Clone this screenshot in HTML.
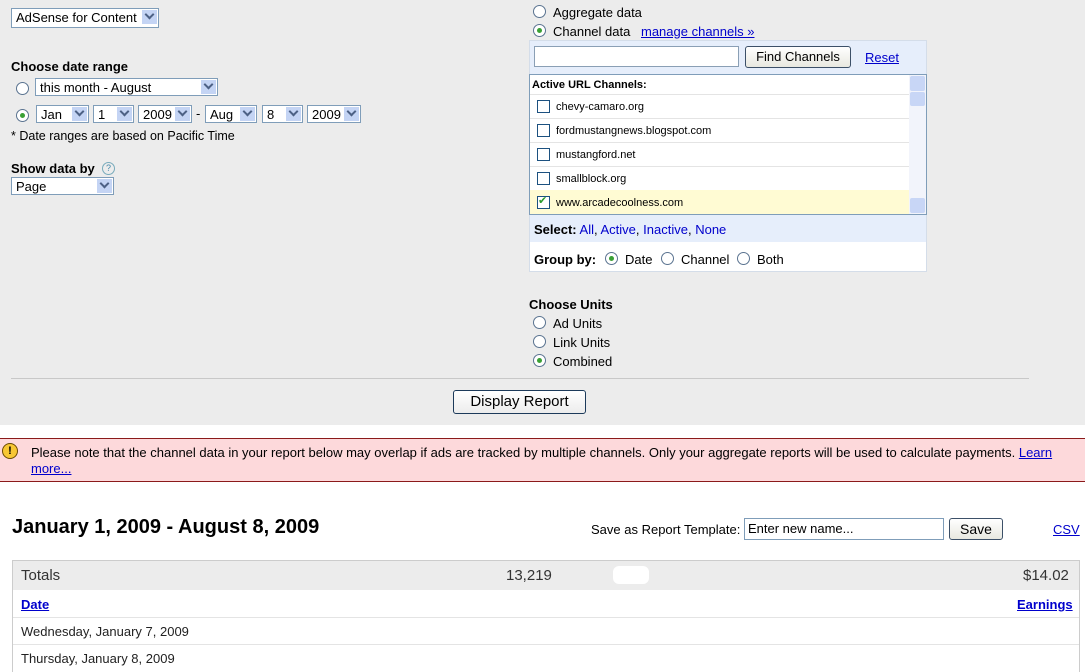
<!DOCTYPE html>
<html><head><style>
body{margin:0;width:1085px;height:672px;overflow:hidden;font-family:"Liberation Sans",Arial,sans-serif;font-size:13px;color:#000;background:#fff;position:relative}
.a{position:absolute;white-space:nowrap}
.sel{position:absolute;height:18px;border:1px solid #7f9db9;background:#fff;font-size:13px;line-height:18px;padding-left:4px;box-sizing:border-box}
.sel:after{content:"";position:absolute;right:1px;top:1px;width:15px;height:14px;background:#c4d4f4;border:0 solid #aac}
.sel i{position:absolute;right:5px;top:4px;width:5px;height:5px;border-right:2px solid #4d6185;border-bottom:2px solid #4d6185;transform:rotate(45deg);z-index:2;top:2px}
.r{position:absolute;width:11px;height:11px;border:1px solid #5a7390;border-radius:50%;background:#fff}
.r.on:after{content:"";position:absolute;left:3px;top:3px;width:5px;height:5px;border-radius:50%;background:#3aa035}
.cb{position:absolute;left:8px;width:11px;height:11px;border:1px solid #1c5180;background:#fff}
a{color:#0000cc}
.b{font-weight:bold}
</style></head><body>
<div class="a" style="left:0;top:0;width:1085px;height:425px;background:#ececec"></div>

<div class="sel" style="left:11px;top:8px;width:148px;height:20px">AdSense for Content<i></i></div>
<div class="a b" style="left:11px;top:59px;font-size:13px">Choose date range</div>
<div class="r" style="left:16px;top:82px"></div>
<div class="sel" style="left:35px;top:78px;width:183px">this month - August<i></i></div>
<div class="r on" style="left:16px;top:109px"></div>
<div class="sel" style="left:36px;top:105px;width:53px">Jan<i></i></div>
<div class="sel" style="left:93px;top:105px;width:41px">1<i></i></div>
<div class="sel" style="left:138px;top:105px;width:54px">2009<i></i></div>
<div class="a" style="left:196px;top:106px">-</div>
<div class="sel" style="left:205px;top:105px;width:52px">Aug<i></i></div>
<div class="sel" style="left:262px;top:105px;width:41px">8<i></i></div>
<div class="sel" style="left:307px;top:105px;width:54px">2009<i></i></div>
<div class="a" style="left:11px;top:129px;font-size:12.5px">* Date ranges are based on Pacific Time</div>
<div class="a b" style="left:11px;top:161px">Show data by</div>
<div class="a" style="left:102px;top:162px;width:11px;height:11px;border:1px solid #7ab;border-radius:50%;font-size:9px;line-height:11px;text-align:center;color:#48a">?</div>
<div class="sel" style="left:11px;top:177px;width:103px">Page<i></i></div>

<div class="r" style="left:533px;top:5px"></div>
<div class="a" style="left:553px;top:5px">Aggregate data</div>
<div class="r on" style="left:533px;top:24px"></div>
<div class="a" style="left:553px;top:24px">Channel data</div>
<div class="a" style="left:641px;top:24px"><a href="#">manage channels »</a></div>

<div class="a" style="left:529px;top:40px;width:398px;height:232px;background:#e6eefb;border:1px solid #d4dde9;box-sizing:border-box"></div>
<div class="a" style="left:534px;top:46px;width:205px;height:21px;background:#fff;border:1px solid #8a9fb5;box-sizing:border-box"></div>
<div class="a" style="left:745px;top:46px;width:106px;height:22px;background:linear-gradient(#fff,#e8e8e0);border:1px solid #3c5068;border-radius:3px;box-sizing:border-box;text-align:center;line-height:20px;font-size:13px">Find Channels</div>
<div class="a" style="left:865px;top:50px"><a href="#">Reset</a></div>
<div class="a" style="left:529px;top:74px;width:398px;height:141px;background:#fff;border:1px solid #7f9db9;box-sizing:border-box"></div>
<div class="a b" style="left:532px;top:79px;font-size:11px">Active URL Channels:</div>
<div class="a" style="left:530px;top:94px;width:379px;height:1px;background:#e4e4e4"></div>
<div class="cb" style="left:537px;top:100px"></div><div class="a" style="left:556px;top:101px;font-size:11px">chevy-camaro.org</div>
<div class="a" style="left:530px;top:118px;width:379px;height:1px;background:#e4e4e4"></div>
<div class="cb" style="left:537px;top:124px"></div><div class="a" style="left:556px;top:125px;font-size:11px">fordmustangnews.blogspot.com</div>
<div class="a" style="left:530px;top:142px;width:379px;height:1px;background:#e4e4e4"></div>
<div class="cb" style="left:537px;top:148px"></div><div class="a" style="left:556px;top:149px;font-size:11px">mustangford.net</div>
<div class="a" style="left:530px;top:166px;width:379px;height:1px;background:#e4e4e4"></div>
<div class="cb" style="left:537px;top:172px"></div><div class="a" style="left:556px;top:173px;font-size:11px">smallblock.org</div>
<div class="a" style="left:530px;top:190px;width:379px;height:24px;background:#fffbd3"></div>
<div class="cb" style="left:537px;top:196px"></div><div class="a" style="left:538px;top:194px;font-size:11px;color:#2a9a2a">✔</div><div class="a" style="left:556px;top:197px;font-size:11px">www.arcadecoolness.com</div>
<div class="a" style="left:909px;top:75px;width:17px;height:139px;background:#f2f4fb"></div>
<div class="a" style="left:910px;top:76px;width:15px;height:15px;background:#c8d6f6;border-radius:2px"></div>
<div class="a" style="left:910px;top:92px;width:15px;height:14px;background:#c8d6f6;border-radius:2px"></div>
<div class="a" style="left:910px;top:198px;width:15px;height:15px;background:#c8d6f6;border-radius:2px"></div>
<div class="a" style="left:534px;top:222px"><b>Select:</b> <a style="text-decoration:none" href="#">All</a>, <a style="text-decoration:none" href="#">Active</a>, <a style="text-decoration:none" href="#">Inactive</a>, <a style="text-decoration:none" href="#">None</a></div>
<div class="a" style="left:529px;top:242px;width:398px;height:30px;background:#fff;border:1px solid #d4dde9;border-top:none;box-sizing:border-box"></div>
<div class="a b" style="left:534px;top:252px">Group by:</div>
<div class="r on" style="left:605px;top:252px"></div><div class="a" style="left:625px;top:252px">Date</div>
<div class="r" style="left:661px;top:252px"></div><div class="a" style="left:681px;top:252px">Channel</div>
<div class="r" style="left:737px;top:252px"></div><div class="a" style="left:757px;top:252px">Both</div>

<div class="a b" style="left:529px;top:297px">Choose Units</div>
<div class="r" style="left:533px;top:316px"></div><div class="a" style="left:553px;top:316px">Ad Units</div>
<div class="r" style="left:533px;top:335px"></div><div class="a" style="left:553px;top:335px">Link Units</div>
<div class="r on" style="left:533px;top:354px"></div><div class="a" style="left:553px;top:354px">Combined</div>
<div class="a" style="left:11px;top:378px;width:1018px;height:1px;background:#c8c8c8"></div>
<div class="a" style="left:453px;top:390px;width:133px;height:24px;background:linear-gradient(#fff,#ececec);border:1px solid #1c3a5a;border-radius:3px;box-sizing:border-box;text-align:center;line-height:22px;font-size:15px">Display Report</div>

<div class="a" style="left:0;top:438px;width:1085px;height:44px;background:#fdd9db;border-top:1px solid #8b1a1a;border-bottom:1px solid #8b1a1a;box-sizing:border-box"></div>
<div class="a" style="left:2px;top:443px;width:16px;height:16px;border-radius:50%;background:#f7c734;border:1px solid #6b4a00;box-sizing:border-box;text-align:center;font-weight:bold;font-size:11px;line-height:14px">!</div>
<div class="a" style="left:31px;top:445px;font-size:13px">Please note that the channel data in your report below may overlap if ads are tracked by multiple channels. Only your aggregate reports will be used to calculate payments. <a href="#">Learn</a></div>
<div class="a" style="left:31px;top:461px;font-size:13px"><a href="#">more...</a></div>

<div class="a b" style="left:12px;top:516px;font-size:20px">January 1, 2009 - August 8, 2009</div>
<div class="a" style="left:591px;top:522px">Save as Report Template:</div>
<div class="a" style="left:744px;top:518px;width:200px;height:22px;border:1px solid #7f9db9;background:#fff;box-sizing:border-box;padding-left:3px;line-height:20px">Enter new name...</div>
<div class="a" style="left:949px;top:518px;width:54px;height:22px;border:1px solid #3c5068;border-radius:3px;background:linear-gradient(#fff,#e8e8e0);box-sizing:border-box;text-align:center;line-height:20px;font-size:14px">Save</div>
<div class="a" style="left:1053px;top:522px"><a href="#">CSV</a></div>

<div class="a" style="left:12px;top:560px;width:1068px;height:112px;border:1px solid #ccc;border-bottom:none;box-sizing:border-box"></div>
<div class="a" style="left:13px;top:561px;width:1066px;height:29px;background:#ececec"></div>
<div class="a" style="left:21px;top:567px;font-size:15px;color:#333">Totals</div>
<div class="a" style="left:506px;top:567px;font-size:15px;color:#333">13,219</div>
<div class="a" style="left:613px;top:566px;width:36px;height:18px;background:#fff;border-radius:6px"></div>
<div class="a" style="left:1023px;top:567px;font-size:15px;color:#333">$14.02</div>
<div class="a b" style="left:21px;top:597px"><a href="#">Date</a></div>
<div class="a b" style="left:1017px;top:597px"><a href="#">Earnings</a></div>
<div class="a" style="left:13px;top:617px;width:1066px;height:1px;background:#e4e4e4"></div>
<div class="a" style="left:21px;top:624px;color:#222">Wednesday, January 7, 2009</div>
<div class="a" style="left:13px;top:644px;width:1066px;height:1px;background:#e4e4e4"></div>
<div class="a" style="left:21px;top:651px;color:#222">Thursday, January 8, 2009</div>
</body></html>
